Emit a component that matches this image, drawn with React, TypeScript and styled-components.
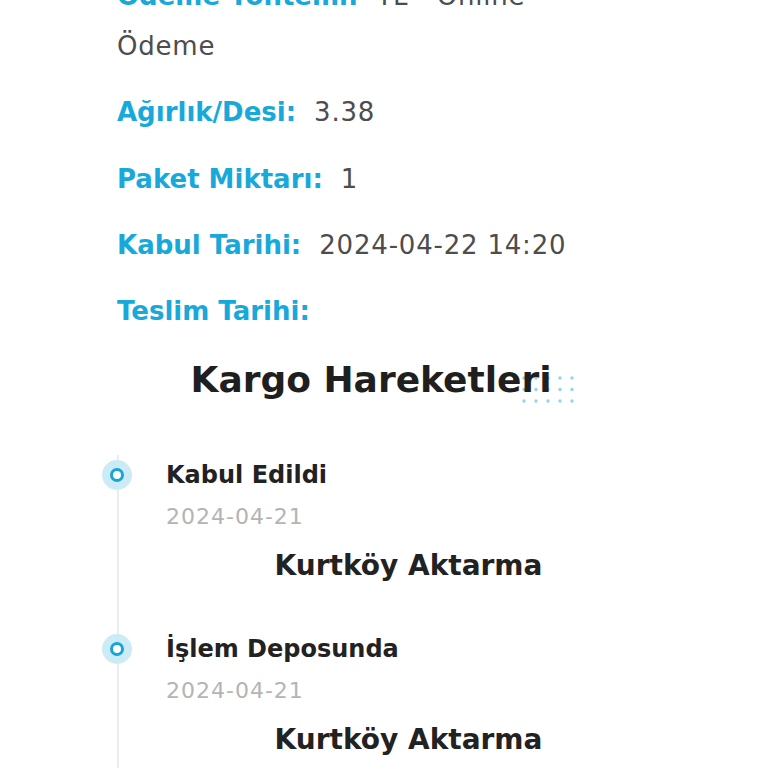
import styled, { createGlobalStyle } from "styled-components";

const GlobalStyle = createGlobalStyle`
  html, body {
    margin: 0;
    padding: 0;
    background: #ffffff;
    overflow: hidden;
  }
  body {
    font-family: "DejaVu Sans", "Noto Sans", sans-serif;
  }
`;

const details = [
  { label: "Ödeme Yöntemi:", value: "TL - Online Ödeme" },
  { label: "Ağırlık/Desi:", value: "3.38" },
  { label: "Paket Miktarı:", value: "1" },
  { label: "Kabul Tarihi:", value: "2024-04-22 14:20" },
  { label: "Teslim Tarihi:", value: "" },
];

const movements = [
  { status: "Kabul Edildi", date: "2024-04-21", place: "Kurtköy Aktarma" },
  { status: "İşlem Deposunda", date: "2024-04-21", place: "Kurtköy Aktarma" },
];

const DotGrid = () => (
  <Dots width="56" height="30" viewBox="0 0 56 30" aria-hidden="true">
    {[0, 1, 2].flatMap((r) =>
      [0, 1, 2, 3, 4].map((c) => (
        <circle key={`${r}-${c}`} cx={4 + c * 12} cy={4 + r * 11.5} r="1.7" fill="#8fd6ea" />
      ))
    )}
  </Dots>
);

export default function App() {
  return (
    <>
      <GlobalStyle />
      <Page>
        <DetailList>
          {details.map((d) => (
            <DetailRow key={d.label}>
              <Label>{d.label}</Label>
              {d.value && <Value>{d.value}</Value>}
            </DetailRow>
          ))}
        </DetailList>

        <HeadingWrap>
          <Heading>
            <DotGrid />
            <HeadingText>Kargo Hareketleri</HeadingText>
          </Heading>
        </HeadingWrap>

        <Timeline>
          {movements.map((m, i) => (
            <Step key={i}>
              <Marker />
              <Status>{m.status}</Status>
              <StepDate>{m.date}</StepDate>
              <Place>{m.place}</Place>
            </Step>
          ))}
        </Timeline>
      </Page>
    </>
  );
}

const Page = styled.main`
  display: flex;
  flex-direction: column;
  padding: 0 117px;
  margin-top: -29px;
`;

const DetailList = styled.dl`
  display: flex;
  flex-direction: column;
  gap: 16.3px;
  max-width: 460px;
  margin: 0;
`;

const DetailRow = styled.div`
  font-size: 26px;
  line-height: 50px;
`;

const Label = styled.span`
  color: #19a8da;
  font-weight: 700;
  margin-right: 18px;
`;

const Value = styled.span`
  color: #4d4d4d;
  font-weight: 400;
  letter-spacing: 0.8px;
`;

const HeadingWrap = styled.div`
  display: flex;
  justify-content: center;
  padding-right: 26px;
  margin-top: 18px;
`;

const Heading = styled.h2`
  position: relative;
  margin: 0;
  font-size: 36px;
  line-height: 52px;
  font-weight: 700;
  color: #1f1f1f;
`;

const HeadingText = styled.span`
  position: relative;
`;

const Dots = styled.svg`
  position: absolute;
  right: -24px;
  top: 20px;
`;

const Timeline = styled.ol`
  list-style: none;
  margin: 49px 0 0;
  padding: 0 0 0 47px;
  border-left: 2px solid #ececec;
`;

const Step = styled.li`
  position: relative;
  display: flex;
  flex-direction: column;
  padding-bottom: 41px;
`;

const Marker = styled.span`
  position: absolute;
  left: -64px;
  top: 5px;
  width: 30px;
  height: 30px;
  border-radius: 50%;
  background: #cdebf6;
  display: flex;
  align-items: center;
  justify-content: center;

  &::after {
    content: "";
    width: 8px;
    height: 8px;
    border-radius: 50%;
    border: 3.5px solid #17a4d6;
    background: #ffffff;
  }
`;

const Status = styled.div`
  font-size: 24px;
  line-height: 40px;
  font-weight: 600;
  color: #222222;
`;

const StepDate = styled.div`
  margin-top: 2px;
  font-size: 22px;
  line-height: 40px;
  font-weight: 400;
  letter-spacing: 1px;
  color: #b4b4b4;
`;

const Place = styled.div`
  margin-top: 7px;
  font-size: 28px;
  line-height: 44px;
  font-weight: 700;
  color: #222222;
  text-align: center;
`;
